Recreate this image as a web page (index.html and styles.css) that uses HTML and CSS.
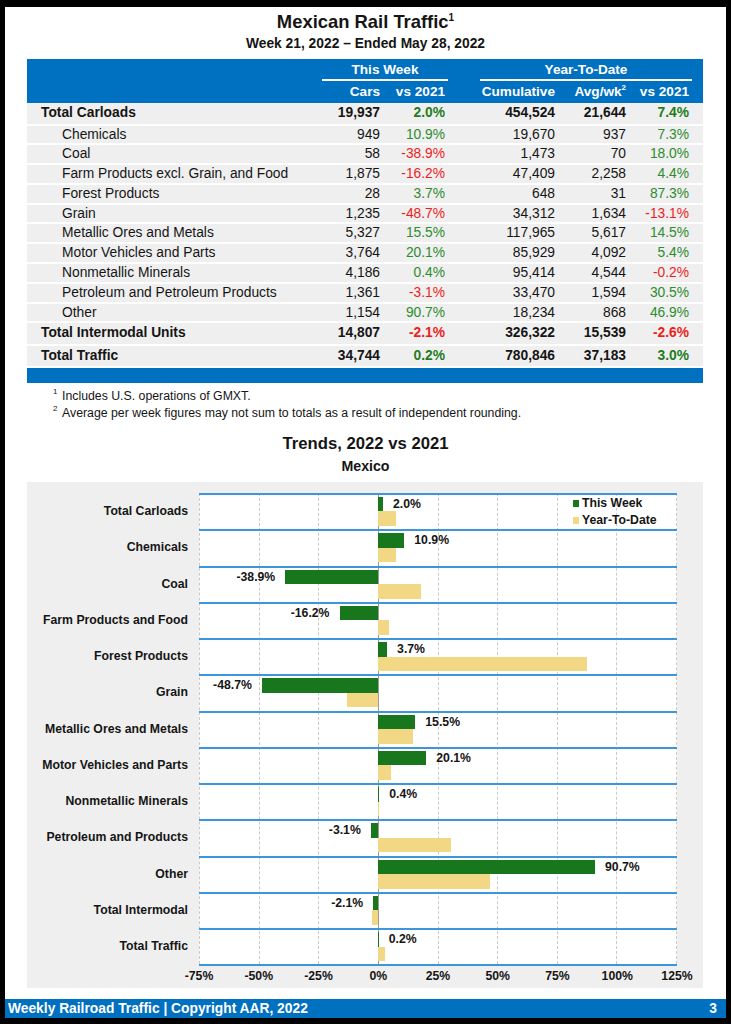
FILE: index.html
```html
<!DOCTYPE html>
<html lang="en">
<head>
<meta charset="utf-8">
<title>Mexican Rail Traffic</title>
<link rel="stylesheet" href="styles.css">
</head>
<body>
<div class="page">
  <header class="head cond">
    <h1 class="title">Mexican Rail Traffic<sup>1</sup></h1>
    <p class="subtitle">Week 21, 2022 – Ended May 28, 2022</p>
  </header>

  <section class="table">
    <div class="thead cond">
      <div class="cols hrow1">
        <div class="grp tw">This Week</div>
        <div class="grp ytd">Year-To-Date</div>
      </div>
      <div class="cols hrow2">
        <div></div>
        <div class="n">Cars</div>
        <div class="n">vs 2021</div>
        <div></div>
        <div class="n">Cumulative</div>
        <div class="n">Avg/wk<sup>2</sup></div>
        <div class="n">vs 2021</div>
        <div></div>
      </div>
    </div>
    <div class="cols trow total"><div class="lbl">Total Carloads</div><div class="n">19,937</div><div class="n g">2.0%</div><div></div><div class="n">454,524</div><div class="n">21,644</div><div class="n g">7.4%</div><div></div></div>
    <div class="cols trow"><div class="lbl">Chemicals</div><div class="n">949</div><div class="n g">10.9%</div><div></div><div class="n">19,670</div><div class="n">937</div><div class="n g">7.3%</div><div></div></div>
    <div class="cols trow"><div class="lbl">Coal</div><div class="n">58</div><div class="n r">-38.9%</div><div></div><div class="n">1,473</div><div class="n">70</div><div class="n g">18.0%</div><div></div></div>
    <div class="cols trow"><div class="lbl">Farm Products excl. Grain, and Food</div><div class="n">1,875</div><div class="n r">-16.2%</div><div></div><div class="n">47,409</div><div class="n">2,258</div><div class="n g">4.4%</div><div></div></div>
    <div class="cols trow"><div class="lbl">Forest Products</div><div class="n">28</div><div class="n g">3.7%</div><div></div><div class="n">648</div><div class="n">31</div><div class="n g">87.3%</div><div></div></div>
    <div class="cols trow"><div class="lbl">Grain</div><div class="n">1,235</div><div class="n r">-48.7%</div><div></div><div class="n">34,312</div><div class="n">1,634</div><div class="n r">-13.1%</div><div></div></div>
    <div class="cols trow"><div class="lbl">Metallic Ores and Metals</div><div class="n">5,327</div><div class="n g">15.5%</div><div></div><div class="n">117,965</div><div class="n">5,617</div><div class="n g">14.5%</div><div></div></div>
    <div class="cols trow"><div class="lbl">Motor Vehicles and Parts</div><div class="n">3,764</div><div class="n g">20.1%</div><div></div><div class="n">85,929</div><div class="n">4,092</div><div class="n g">5.4%</div><div></div></div>
    <div class="cols trow"><div class="lbl">Nonmetallic Minerals</div><div class="n">4,186</div><div class="n g">0.4%</div><div></div><div class="n">95,414</div><div class="n">4,544</div><div class="n r">-0.2%</div><div></div></div>
    <div class="cols trow"><div class="lbl">Petroleum and Petroleum Products</div><div class="n">1,361</div><div class="n r">-3.1%</div><div></div><div class="n">33,470</div><div class="n">1,594</div><div class="n g">30.5%</div><div></div></div>
    <div class="cols trow"><div class="lbl">Other</div><div class="n">1,154</div><div class="n g">90.7%</div><div></div><div class="n">18,234</div><div class="n">868</div><div class="n g">46.9%</div><div></div></div>
    <div class="cols trow total"><div class="lbl">Total Intermodal Units</div><div class="n">14,807</div><div class="n r">-2.1%</div><div></div><div class="n">326,322</div><div class="n">15,539</div><div class="n r">-2.6%</div><div></div></div>
    <div class="cols trow total"><div class="lbl">Total Traffic</div><div class="n">34,744</div><div class="n g">0.2%</div><div></div><div class="n">780,846</div><div class="n">37,183</div><div class="n g">3.0%</div><div></div></div>
    <div class="tfoot"></div>
  </section>

  <div class="notes">
    <p><sup>1</sup>Includes U.S. operations of GMXT.</p>
    <p><sup>2</sup>Average per week figures may not sum to totals as a result of independent rounding.</p>
  </div>

  <h2 class="ctitle cond">Trends, 2022 vs 2021</h2>
  <p class="csub cond">Mexico</p>

  <section class="chart cond">
    <div class="cbody">
      <div class="cats">
        <div class="cat">Total Carloads</div>
        <div class="cat">Chemicals</div>
        <div class="cat">Coal</div>
        <div class="cat">Farm Products and Food</div>
        <div class="cat">Forest Products</div>
        <div class="cat">Grain</div>
        <div class="cat">Metallic Ores and Metals</div>
        <div class="cat">Motor Vehicles and Parts</div>
        <div class="cat">Nonmetallic Minerals</div>
        <div class="cat">Petroleum and Products</div>
        <div class="cat">Other</div>
        <div class="cat">Total Intermodal</div>
        <div class="cat">Total Traffic</div>
      </div>
      <div class="plot">
        <div class="glines">
          <div class="gl"></div><div class="gl"></div><div class="gl"></div><div class="gl zero"></div><div class="gl"></div><div class="gl"></div><div class="gl"></div><div class="gl"></div>
        </div>
        <div class="legend">
          <div class="lg"><span class="sw wk"></span>This Week</div>
          <div class="lg"><span class="sw yt"></span>Year-To-Date</div>
        </div>

        <div class="band">
          <div class="cell neg"></div>
          <div class="cell pos"><span class="bar wk" style="width:4.78px"></span><span class="val">2.0%</span></div>
          <div class="cell neg"></div>
          <div class="cell pos"><span class="bar yt" style="width:17.69px"></span></div>
        </div>
        <div class="band">
          <div class="cell neg"></div>
          <div class="cell pos"><span class="bar wk" style="width:26.05px"></span><span class="val">10.9%</span></div>
          <div class="cell neg"></div>
          <div class="cell pos"><span class="bar yt" style="width:17.45px"></span></div>
        </div>
        <div class="band">
          <div class="cell neg"><span class="val">-38.9%</span><span class="bar wk" style="width:92.97px"></span></div>
          <div class="cell pos"></div>
          <div class="cell neg"></div>
          <div class="cell pos"><span class="bar yt" style="width:43.02px"></span></div>
        </div>
        <div class="band">
          <div class="cell neg"><span class="val">-16.2%</span><span class="bar wk" style="width:38.72px"></span></div>
          <div class="cell pos"></div>
          <div class="cell neg"></div>
          <div class="cell pos"><span class="bar yt" style="width:10.52px"></span></div>
        </div>
        <div class="band">
          <div class="cell neg"></div>
          <div class="cell pos"><span class="bar wk" style="width:8.84px"></span><span class="val">3.7%</span></div>
          <div class="cell neg"></div>
          <div class="cell pos"><span class="bar yt" style="width:208.65px"></span></div>
        </div>
        <div class="band">
          <div class="cell neg"><span class="val">-48.7%</span><span class="bar wk" style="width:116.39px"></span></div>
          <div class="cell pos"></div>
          <div class="cell neg"><span class="bar yt" style="width:31.31px"></span></div>
          <div class="cell pos"></div>
        </div>
        <div class="band">
          <div class="cell neg"></div>
          <div class="cell pos"><span class="bar wk" style="width:37.05px"></span><span class="val">15.5%</span></div>
          <div class="cell neg"></div>
          <div class="cell pos"><span class="bar yt" style="width:34.66px"></span></div>
        </div>
        <div class="band">
          <div class="cell neg"></div>
          <div class="cell pos"><span class="bar wk" style="width:48.04px"></span><span class="val">20.1%</span></div>
          <div class="cell neg"></div>
          <div class="cell pos"><span class="bar yt" style="width:12.91px"></span></div>
        </div>
        <div class="band">
          <div class="cell neg"></div>
          <div class="cell pos"><span class="bar wk" style="width:0.96px"></span><span class="val">0.4%</span></div>
          <div class="cell neg"><span class="bar yt" style="width:0.48px"></span></div>
          <div class="cell pos"></div>
        </div>
        <div class="band">
          <div class="cell neg"><span class="val">-3.1%</span><span class="bar wk" style="width:7.41px"></span></div>
          <div class="cell pos"></div>
          <div class="cell neg"></div>
          <div class="cell pos"><span class="bar yt" style="width:72.9px"></span></div>
        </div>
        <div class="band">
          <div class="cell neg"></div>
          <div class="cell pos"><span class="bar wk" style="width:216.77px"></span><span class="val">90.7%</span></div>
          <div class="cell neg"></div>
          <div class="cell pos"><span class="bar yt" style="width:112.09px"></span></div>
        </div>
        <div class="band">
          <div class="cell neg"><span class="val">-2.1%</span><span class="bar wk" style="width:5.02px"></span></div>
          <div class="cell pos"></div>
          <div class="cell neg"><span class="bar yt" style="width:6.21px"></span></div>
          <div class="cell pos"></div>
        </div>
        <div class="band">
          <div class="cell neg"></div>
          <div class="cell pos"><span class="bar wk" style="width:0.48px"></span><span class="val">0.2%</span></div>
          <div class="cell neg"></div>
          <div class="cell pos"><span class="bar yt" style="width:7.17px"></span></div>
        </div>
      </div>
    </div>
    <div class="axis">
      <span>-75%</span><span>-50%</span><span>-25%</span><span>0%</span><span>25%</span><span>50%</span><span>75%</span><span>100%</span><span>125%</span>
    </div>
  </section>

  <footer class="foot cond">
    <span>Weekly Railroad Traffic | Copyright AAR, 2022</span>
    <span>3</span>
  </footer>
</div>
</body>
</html>
```

FILE: styles.css
```css
html, body {
  margin: 0;
  padding: 0;
  background: #000;
}
body {
  font-family: "Liberation Sans", Arial, sans-serif;
  color: #151515;
}
.page {
  width: 721px;
  margin: 7px 0 0 5px;
  background: #fff;
}
.cond {
  font-family: "Liberation Sans", Arial, sans-serif;
  font-weight: 700;
}

/* Heading */
.head {
  padding-top: 4px;
  text-align: center;
}
.title {
  margin: 0;
  font-size: 18.4px;
  line-height: 22px;
  font-weight: 700;
}
.title sup {
  font-size: 10px;
  line-height: 0;
  vertical-align: 7px;
}
.subtitle {
  margin: 2px 0 0;
  font-size: 13.8px;
  line-height: 18px;
}

/* Table */
.table {
  margin: 6px 0 0 22px;
  width: 676px;
}
.cols {
  display: grid;
  grid-template-columns: 295px 61px 65px 32px 78px 71px 63px 11px;
}
.thead {
  background: #0070c0;
  color: #fff;
  font-size: 13.6px;
}
.hrow1 {
  height: 22px;
}
.grp {
  box-sizing: border-box;
  height: 22px;
  line-height: 21px;
  text-align: center;
  border-bottom: 2px solid #fff;
}
.tw { grid-column: 2 / 4; }
.ytd { grid-column: 5 / 8; }
.hrow2 {
  height: 22px;
  line-height: 22px;
  white-space: nowrap;
}
.hrow2 sup {
  font-size: 8px;
  line-height: 0;
  vertical-align: 6px;
}
.trow {
  height: 17.8px;
  line-height: 17.8px;
  background: #efefef;
  border-bottom: 2px solid #fff;
  font-size: 13.8px;
  white-space: nowrap;
}
.trow.total {
  height: 20.5px;
  line-height: 20.5px;
  font-weight: 700;
}
.lbl { padding-left: 35px; }
.total .lbl { padding-left: 14px; }
.n {
  text-align: right;
  padding-right: 3px;
}
.g { color: #2d8c2d; }
.r { color: #ee1d1d; }
.total .g { color: #1e7d1e; }
.tfoot {
  height: 15px;
  background: #0070c0;
}

/* Notes */
.notes {
  margin: 5px 0 0 48px;
  font-size: 12.3px;
  line-height: 17px;
}
.notes p { margin: 0; }
.notes sup {
  display: inline-block;
  width: 9px;
  font-size: 8px;
  line-height: 0;
  vertical-align: 6px;
}

/* Chart */
.ctitle {
  margin: 10.5px 0 0;
  text-align: center;
  font-size: 16.7px;
  line-height: 22px;
}
.csub {
  margin: 2px 0 0;
  text-align: center;
  font-size: 14.2px;
  line-height: 18px;
}
.chart {
  margin: 7px 0 0 22px;
  width: 676px;
  height: 506px;
  box-sizing: border-box;
  padding-top: 11px;
  background: #efefef;
  font-size: 12.25px;
}
.cbody {
  display: grid;
  grid-template-columns: 172px 478px;
}
.cats {
  display: flex;
  flex-direction: column;
}
.cat {
  height: 36.28px;
  display: flex;
  align-items: center;
  justify-content: flex-end;
  padding-right: 11px;
  white-space: nowrap;
}
.plot {
  position: relative;
  background: #fff;
  border-bottom: 2px solid #3d95dc;
}
.glines {
  position: absolute;
  inset: 0;
  display: flex;
  z-index: 0;
}
.gl {
  flex: 1 1 0;
  border-left: 1px dashed #cacaca;
}
.gl:last-child { border-right: 1px dashed #cacaca; }
.gl.zero { border-left: 1px solid #9a9a9a; }
.band {
  position: relative;
  z-index: 1;
  box-sizing: border-box;
  height: 36.28px;
  border-top: 2px solid #3d95dc;
  padding-top: 2px;
  display: grid;
  grid-template-columns: 179.25px 298.75px;
  grid-template-rows: 14.5px 14.5px;
}
.cell {
  display: flex;
  align-items: stretch;
  white-space: nowrap;
}
.neg { justify-content: flex-end; }
.bar { display: block; height: 100%; }
.wk { background: #18761c; }
.yt { background: #f2d884; }
.val {
  align-self: center;
  line-height: 14.5px;
}
.neg .val { margin-right: 10px; }
.pos .val { margin-left: 10px; }
.legend {
  position: absolute;
  left: 374px;
  top: 2.5px;
  z-index: 2;
  line-height: 17px;
}
.lg {
  display: flex;
  align-items: center;
  gap: 3px;
}
.sw {
  display: block;
  width: 6px;
  height: 7px;
}
.axis {
  display: grid;
  grid-template-columns: repeat(9, 59.75px);
  margin-left: 142.125px;
  height: 20px;
  line-height: 20px;
  text-align: center;
}

/* Footer */
.foot {
  margin-top: 11px;
  height: 19px;
  line-height: 19px;
  background: #0070c0;
  color: #fff;
  display: flex;
  justify-content: space-between;
  padding: 0 9px 0 3px;
  font-size: 13.8px;
}
```
